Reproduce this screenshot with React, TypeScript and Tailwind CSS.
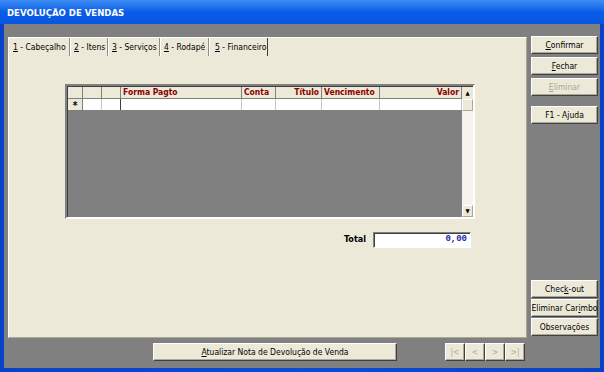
import React from 'react';

const FONT = "font-['DejaVu_Sans_Condensed','Liberation_Sans',sans-serif]";

const btn =
  'flex items-center justify-center whitespace-nowrap bg-[#ece9d8] border border-t-white border-l-white border-r-[#404040] border-b-[#404040] shadow-[inset_-1px_-1px_0_#aca899] text-[8.5px]';

const Btn: React.FC<{ className?: string; disabled?: boolean; children: React.ReactNode }> = ({
  className = '',
  disabled,
  children,
}) => (
  <div className={`${btn} ${disabled ? 'text-[#aca899]' : 'text-black'} ${className}`}>
    <span>{children}</span>
  </div>
);

const tabs = [
  { n: '1', label: ' - Cabeçalho', w: 'w-[61px]' },
  { n: '2', label: ' - Itens', w: 'w-[38px]' },
  { n: '3', label: ' - Serviços', w: 'w-[52px]' },
  { n: '4', label: ' - Rodapé', w: 'w-[49px]' },
];

const cols = [
  { label: '', w: 'w-[19px]', align: 'text-left' },
  { label: '', w: 'w-[19px]', align: 'text-left' },
  { label: 'Forma Pagto', w: 'w-[121px]', align: 'text-left' },
  { label: 'Conta', w: 'w-[34px]', align: 'text-left' },
  { label: 'Título', w: 'w-[46px]', align: 'text-right' },
  { label: 'Vencimento', w: 'w-[58px]', align: 'text-left' },
  { label: 'Valor', w: 'w-[82px]', align: 'text-right' },
];

export default function App() {
  return (
    <div className={`w-[604px] h-[372px] flex flex-col bg-[#0a4bd8] overflow-hidden ${FONT}`}>
      <div className="h-[24px] shrink-0 flex items-center pl-[7px] pt-[2px] bg-gradient-to-b from-[#3d8df5] via-[#0a5ce6] to-[#0656e2] text-white font-bold text-[9.5px]">
        DEVOLUÇÃO DE VENDAS
      </div>
      <div className="flex-1 flex px-[4px] pb-[4px] bg-gradient-to-r from-[#0842c8] via-[#0a4bd8] to-[#0842c8]">
        <div className="flex-1 bg-[#808080] flex flex-col">
          <div className="flex items-start">
            {/* main panel */}
            <div className="ml-[4px] mt-[13px] w-[519px] h-[301px] bg-[#ece9d8] border-l border-t border-l-white border-t-white border-r border-b border-r-[#aca899] border-b-[#aca899] flex flex-col">
              <div className="h-[18px] flex items-stretch text-[8.5px] text-black">
                {tabs.map((t) => (
                  <div
                    key={t.n}
                    className={`${t.w} flex items-center pl-[4px] whitespace-nowrap border-r border-r-[#8c8c8c] shadow-[1px_0_0_white]`}
                  >
                    <span>
                      <span className="underline">{t.n}</span>
                      {t.label}
                    </span>
                  </div>
                ))}
                <div className="w-[59px] flex items-center pl-[5px] whitespace-nowrap border-l border-l-white border-r border-r-[#404040]">
                  <span>
                    <span className="underline">5</span> - Financeiro
                  </span>
                </div>
              </div>

              <div className="ml-[56px] mt-[28px] flex flex-col">
                {/* grid */}
                <div className="w-[410px] h-[135px] border-2 border-t-[#808080] border-l-[#808080] border-b-white border-r-white shadow-[inset_1px_1px_0_#404040] flex bg-[#808080]">
                  <div className="flex-1 flex flex-col mt-[1px] ml-[1px]">
                    <div className="h-[12px] flex bg-[#ece9d8] text-[8.5px] font-bold text-[#8b0000] leading-[11px]">
                      <div className="w-[15px] border-r border-b border-[#808080]" />
                      {cols.map((c, i) => (
                        <div
                          key={i}
                          className={`${c.w} ${c.align} px-[2px] border-r border-b border-[#808080] whitespace-nowrap overflow-hidden`}
                        >
                          {c.label}
                        </div>
                      ))}
                    </div>
                    <div className="h-[12px] flex bg-white border-b border-[#808080]">
                      <div className="w-[15px] bg-[#ece9d8] border-r border-[#808080] flex items-center justify-center text-[10px] font-bold leading-none pt-[2px]">
                        *
                      </div>
                      {cols.map((c, i) => (
                        <div
                          key={i}
                          className={`${c.w} border-r ${i === 1 ? 'border-[#404040]' : 'border-[#c8c8c8]'}`}
                        />
                      ))}
                    </div>
                  </div>
                  {/* scrollbar */}
                  <div className="w-[12px] mt-[1px] flex flex-col bg-[#f4f3ee]">
                    <div className="h-[12px] bg-[#ece9d8] flex items-center justify-center text-[6px] leading-none">▲</div>
                    <div className="h-[12px] bg-[#ece9d8] border border-t-white border-l-white border-r-[#aca899] border-b-[#aca899]" />
                    <div className="flex-1" />
                    <div className="h-[12px] bg-[#ece9d8] border border-t-white border-l-white border-r-[#aca899] border-b-[#aca899] flex items-center justify-center text-[6px] leading-none">
                      ▼
                    </div>
                  </div>
                </div>

                {/* total */}
                <div className="w-[410px] mt-[13px] flex items-center justify-end pr-[4px]">
                  <span className="text-[9px] font-bold mr-[7px]">Total</span>
                  <div className="w-[98px] h-[16px] bg-white border border-t-[#808080] border-l-[#808080] border-b-white border-r-white shadow-[inset_1px_1px_0_#404040] flex items-center justify-end pr-[3px] font-['Liberation_Mono',monospace] font-bold text-[9px] text-[#1c1ca8]">
                    0,00
                  </div>
                </div>
              </div>
            </div>

            {/* right buttons */}
            <div className="ml-[4px] mt-[12px] w-[67px] h-[300px] flex flex-col justify-between">
              <div className="flex flex-col">
                <Btn className="h-[18px]">
                  <span className="underline">C</span>onfirmar
                </Btn>
                <Btn className="h-[18px] mt-[3px]">
                  <span className="underline">F</span>echar
                </Btn>
                <Btn className="h-[18px] mt-[3px]" disabled>
                  <span className="underline">E</span>liminar
                </Btn>
                <Btn className="h-[18px] mt-[10px]">F1 - Ajuda</Btn>
              </div>
              <div className="flex flex-col gap-[1px]">
                <Btn className="h-[18px]">
                  Chec<span className="underline">k</span>-out
                </Btn>
                <Btn className="h-[18px]">
                  Eliminar Car<span className="underline">i</span>mbo
                </Btn>
                <Btn className="h-[18px]">Observações</Btn>
              </div>
            </div>
          </div>

          {/* bottom row */}
          <div className="flex items-start mt-[5px]">
            <Btn className="ml-[149px] w-[244px] h-[18px]">
              <span className="underline">A</span>tualizar Nota de Devolução de Venda
            </Btn>
            <div className="ml-[48px] flex">
              {['|<', '<', '>', '>|'].map((s) => (
                <Btn key={s} className="w-[20px] h-[18px]" disabled>
                  {s}
                </Btn>
              ))}
            </div>
          </div>
        </div>
      </div>
    </div>
  );
}
